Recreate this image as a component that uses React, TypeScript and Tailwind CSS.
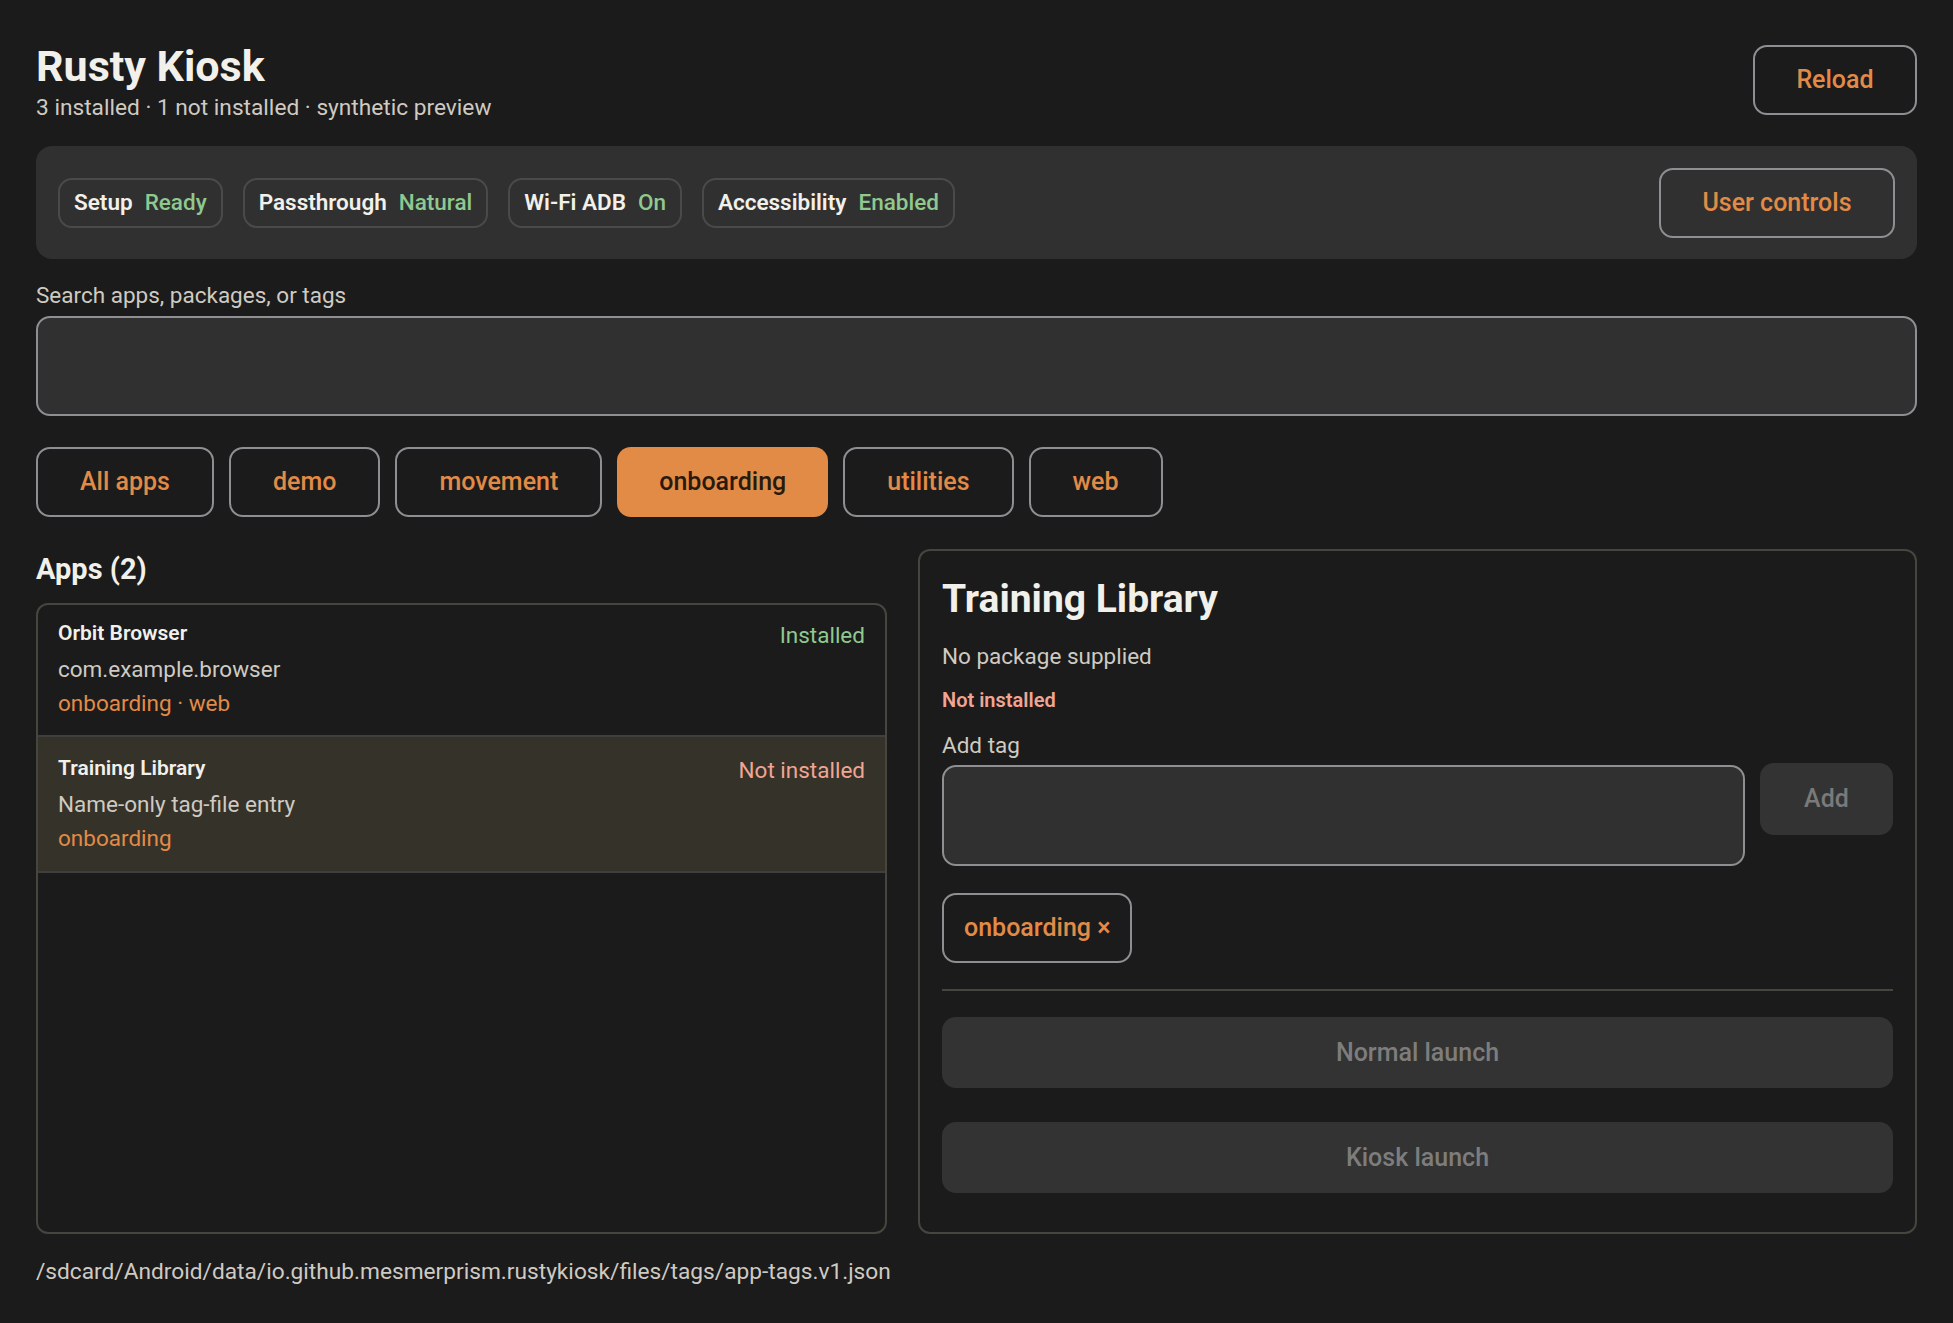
import React from "react";

const chips = [
  { k: "Setup", v: "Ready" },
  { k: "Passthrough", v: "Natural" },
  { k: "Wi-Fi ADB", v: "On" },
  { k: "Accessibility", v: "Enabled" },
];

const filters = ["All apps", "demo", "movement", "onboarding", "utilities", "web"];

export default function App() {
  return (
    <div className="min-h-screen flex flex-col bg-[#1b1b1b] text-[#f2f0ea] font-['Roboto',sans-serif] px-9 pt-[40px] pb-9">
      {/* Header */}
      <div className="flex items-start justify-between">
        <div className="flex flex-col">
          <h1 className="text-[43px] font-bold leading-[53px]">Rusty Kiosk</h1>
          <p className="text-[22.7px] leading-[30px] text-[#cfcac2]">3 installed · 1 not installed · synthetic preview</p>
        </div>
        <button className="mt-[5px] h-[70px] w-[164px] rounded-[14px] border-2 border-[#8e8e93] text-[25px] font-medium text-[#e28b47]">
          Reload
        </button>
      </div>

      {/* Status panel */}
      <div className="mt-[23px] flex h-[113px] items-center justify-between rounded-[16px] bg-[#303030] px-[22px]">
        <div className="flex gap-5">
          {chips.map((c) => (
            <div key={c.k} className="flex h-[50px] items-center gap-[12px] rounded-[14px] border-2 border-[#4a4a4a] px-[14px] text-[22.5px]">
              <span className="font-semibold text-[#f2f0ea]">{c.k}</span>
              <span className="font-medium text-[#8fc98f]">{c.v}</span>
            </div>
          ))}
        </div>
        <button className="h-[70px] w-[236px] rounded-[14px] border-2 border-[#8e8e93] text-[25px] font-medium text-[#e28b47]">
          User controls
        </button>
      </div>

      {/* Search */}
      <label className="mt-[21px] text-[22.5px] leading-[30px] text-[#cfcac2]">Search apps, packages, or tags</label>
      <div className="mt-[6px] h-[100px] rounded-[14px] border-2 border-[#8e8e93] bg-[#303030]" />

      {/* Filters */}
      <div className="mt-[31px] flex gap-[15px]">
        {filters.map((f) =>
          f === "onboarding" ? (
            <button key={f} className="h-[70px] rounded-[14px] bg-[#e28b47] px-[42px] text-[25px] font-medium text-[#2a1a0c]">
              {f}
            </button>
          ) : (
            <button key={f} className="h-[70px] rounded-[14px] border-2 border-[#8e8e93] px-[42px] text-[25px] font-medium text-[#e28b47]">
              {f}
            </button>
          )
        )}
      </div>

      {/* Columns */}
      <div className="mt-[32px] grid flex-1 grid-cols-[851px_1fr] gap-[31px]">
        <div className="flex flex-col">
          <h2 className="text-[29px] font-bold leading-[40px]">Apps (2)</h2>
          <div className="mt-[14px] flex-1 overflow-hidden rounded-[12px] border-2 border-[#46463f]">
            <div className="flex h-[132px] flex-col border-b-2 border-[#3f3f3d] px-5 pt-[13px]">
              <div className="flex items-start justify-between">
                <span className="text-[21px] font-semibold leading-[30px]">Orbit Browser</span>
                <span className="text-[22.5px] leading-[34px] text-[#8fc98f]">Installed</span>
              </div>
              <span className="text-[22.5px] leading-[34px] text-[#cfcac2]">com.example.browser</span>
              <span className="text-[22.5px] leading-[34px] text-[#e28b47]">onboarding · web</span>
            </div>
            <div className="flex h-[136px] flex-col border-b-2 border-[#3f3f3d] bg-[#353229] px-5 pt-[16px]">
              <div className="flex items-start justify-between">
                <span className="text-[21px] font-semibold leading-[30px]">Training Library</span>
                <span className="text-[22.5px] leading-[34px] text-[#f1a593]">Not installed</span>
              </div>
              <span className="text-[22.5px] leading-[34px] text-[#cfcac2]">Name-only tag-file entry</span>
              <span className="text-[22.5px] leading-[34px] text-[#e28b47]">onboarding</span>
            </div>
          </div>
        </div>

        <div className="flex flex-col rounded-[12px] border-2 border-[#46463f] px-[22px] pt-[24px]">
          <h2 className="text-[39px] font-bold leading-[48px]">Training Library</h2>
          <p className="mt-[18px] text-[22.5px] leading-[30px] text-[#cfcac2]">No package supplied</p>
          <p className="mt-[15px] text-[20px] font-semibold leading-[28px] text-[#f1a593]">Not installed</p>
          <p className="mt-[16px] text-[22.5px] leading-[30px] text-[#cfcac2]">Add tag</p>
          <div className="mt-[5px] flex items-start gap-[15px]">
            <div className="h-[101px] flex-1 rounded-[14px] border-2 border-[#8e8e93] bg-[#303030]" />
            <button className="mt-[-2px] h-[72px] w-[133px] rounded-[14px] bg-[#333333] text-[25px] font-medium text-[#7a7a7a]">
              Add
            </button>
          </div>
          <div className="mt-[27px] flex">
            <button className="h-[70px] rounded-[14px] border-2 border-[#8e8e93] px-[20px] text-[25px] font-medium text-[#e28b47]">
              onboarding ×
            </button>
          </div>
          <div className="mt-[26px] h-[2px] bg-[#46463f]" />
          <button className="mt-[26px] h-[71px] rounded-[14px] bg-[#333333] text-[25px] font-medium text-[#7d7d7d]">
            Normal launch
          </button>
          <button className="mt-[34px] h-[71px] rounded-[14px] bg-[#333333] text-[25px] font-medium text-[#7d7d7d]">
            Kiosk launch
          </button>
        </div>
      </div>

      <p className="mt-[23px] text-[22.7px] leading-[30px] text-[#cfcac2]">
        /sdcard/Android/data/io.github.mesmerprism.rustykiosk/files/tags/app-tags.v1.json
      </p>
    </div>
  );
}
